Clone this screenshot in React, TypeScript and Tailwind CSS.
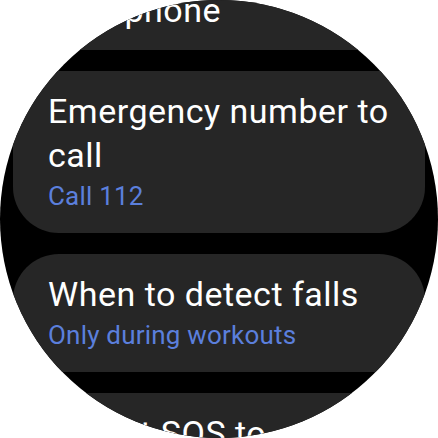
type Item = { title: string; subtitle?: string };

const items: Item[] = [
  { title: "Emergency alerts on your phone" },
  { title: "Emergency number to call", subtitle: "Call 112" },
  { title: "When to detect falls", subtitle: "Only during workouts" },
  { title: "Report SOS to emergency contacts" },
];

function Chip({ item }: { item: Item }) {
  return (
    <div className="rounded-[46px] bg-[#262626] pl-[35px] pr-[26px] py-[18px]">
      <div className="text-[34px] leading-[44px] tracking-[0.5px] text-white">{item.title}</div>
      {item.subtitle && (
        <div className="text-[26px] leading-[38px] tracking-[0.2px] text-[#5b7fdc]">{item.subtitle}</div>
      )}
    </div>
  );
}

export default function App() {
  return (
    <div className="w-[438px] h-[438px] bg-white" style={{ fontFamily: "Roboto, 'Noto Sans', sans-serif" }}>
      <div className="w-[438px] h-[438px] rounded-full bg-black overflow-hidden">
        <div className="flex flex-col gap-[21px] px-[13px] -mt-[74px]">
          {items.map((item) => (
            <Chip key={item.title} item={item} />
          ))}
        </div>
      </div>
    </div>
  );
}
